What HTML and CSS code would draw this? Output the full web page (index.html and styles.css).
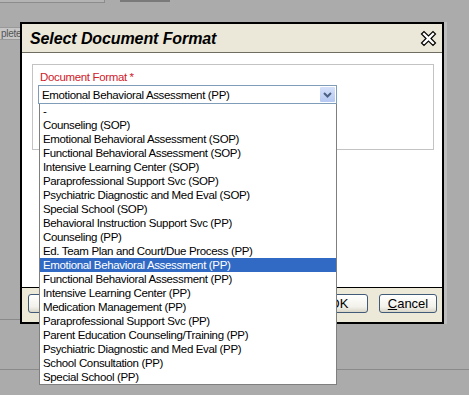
FILE: index.html
```html
<!DOCTYPE html>
<html lang="en">
<head>
    <meta charset="UTF-8">
    <title>Select Document Format</title>
    <link rel="stylesheet" href="styles.css">
</head>
<body>
    <!-- Page behind the dialog -->
    <div class="page">
        <div class="toolbar">
            <div class="tool-field"></div>
            <div class="tool-button"></div>
        </div>
        <div class="status-tag">pleted</div>
        <div class="page-rule rule-upper"></div>
        <div class="page-rule rule-lower"></div>
    </div>

    <!-- Dialog -->
    <div class="dialog">
        <div class="dialog-title">
            <span>Select Document Format</span>
            <svg class="close-icon" width="17" height="17" viewBox="0 0 17 17">
                <polygon points="1.5,4 4,1.5 8.5,6 13,1.5 15.5,4 11,8.5 15.5,13 13,15.5 8.5,11 4,15.5 1.5,13 6,8.5" fill="#fff" stroke="#000" stroke-width="1.2" stroke-linejoin="miter"/>
            </svg>
        </div>
        <div class="dialog-body">
            <div class="fieldset">
                <div class="field-label">Document Format *</div>
                <div class="select-box">
                    <span>Emotional Behavioral Assessment (PP)</span>
                    <div class="select-arrow">
                        <svg width="9" height="6" viewBox="0 0 9 6">
                            <polyline points="1,1 4.5,4.5 8,1" fill="none" stroke="#4d6185" stroke-width="2"/>
                        </svg>
                    </div>
                </div>
            </div>
        </div>
        <div class="dialog-footer">
            <button class="btn btn-left"></button>
            <div class="footer-right">
                <button class="btn">OK</button>
                <button class="btn"><u>C</u>ancel</button>
            </div>
        </div>
    </div>

    <!-- Open dropdown list -->
    <ul class="dropdown">
        <li>-</li>
        <li>Counseling (SOP)</li>
        <li>Emotional Behavioral Assessment (SOP)</li>
        <li>Functional Behavioral Assessment (SOP)</li>
        <li>Intensive Learning Center (SOP)</li>
        <li>Paraprofessional Support Svc (SOP)</li>
        <li>Psychiatric Diagnostic and Med Eval (SOP)</li>
        <li>Special School (SOP)</li>
        <li>Behavioral Instruction Support Svc (PP)</li>
        <li>Counseling (PP)</li>
        <li>Ed. Team Plan and Court/Due Process (PP)</li>
        <li class="selected">Emotional Behavioral Assessment (PP)</li>
        <li>Functional Behavioral Assessment (PP)</li>
        <li>Intensive Learning Center (PP)</li>
        <li>Medication Management (PP)</li>
        <li>Paraprofessional Support Svc (PP)</li>
        <li>Parent Education Counseling/Training (PP)</li>
        <li>Psychiatric Diagnostic and Med Eval (PP)</li>
        <li>School Consultation (PP)</li>
        <li>Special School (PP)</li>
    </ul>
</body>
</html>
```

FILE: styles.css
```css
/* General */
body {
    margin: 0;
    width: 469px;
    height: 395px;
    overflow: hidden;
    background-color: #ababab;
    font-family: 'Liberation Sans', Arial, sans-serif;
    font-size: 11.5px;
    letter-spacing: -0.35px;
    color: #000;
    position: relative;
}

/* Page behind the dialog */
.page {
    height: 395px;
    position: relative;
}

.toolbar {
    display: flex;
    gap: 15px;
    height: 3px;
}

.tool-field {
    width: 104px;
    height: 2px;
    background-color: #b4b4b4;
    border-bottom: 1px solid #8c8c8c;
    border-right: 1px solid #8c8c8c;
}

.tool-button {
    width: 50px;
    height: 2px;
    background-color: #7a7a7a;
}

.status-tag {
    margin-top: 24px;
    width: 30px;
    height: 11px;
    padding-left: 1px;
    background-color: #c6c6c6;
    border: 1px solid #999;
    border-left: none;
    font-size: 10px;
    line-height: 11px;
    letter-spacing: -0.3px;
    color: #555;
    white-space: nowrap;
}

.page-rule {
    position: absolute;
    left: 0;
    right: 0;
    height: 1px;
    background-color: #8a8a8a;
}

.rule-upper {
    top: 319px;
    right: 420px;
}

.rule-lower {
    top: 369px;
}

/* Dialog */
.dialog {
    position: absolute;
    left: 20px;
    top: 22px;
    width: 420px;
    border: 2px solid #000;
    background-color: #fff;
    box-shadow: 3px 0 0 #bdbdbd;
}

.dialog-title {
    height: 28px;
    background-color: #ebe8d9;
    border-bottom: 1px solid #6f6c60;
    display: flex;
    align-items: center;
    justify-content: space-between;
    padding: 0 5px 0 8px;
}

.dialog-title span {
    font-size: 16px;
    font-weight: bold;
    font-style: italic;
    letter-spacing: -0.1px;
    padding-top: 2px;
}

.close-icon {
    display: block;
}

.dialog-body {
    height: 223px;
    padding: 11px 8px 0 10px;
}

.fieldset {
    border: 1px solid #c3c3c3;
    height: 78px;
    padding: 6px 0 0 5px;
}

.field-label {
    color: #d0202a;
    height: 14px;
    padding-left: 2px;
}

.select-box {
    width: 294px;
    height: 17px;
    border: 1px solid #7f9db9;
    display: flex;
    align-items: center;
    justify-content: space-between;
    padding-left: 3px;
}

.select-arrow {
    width: 15px;
    height: 15px;
    margin-right: 1px;
    background: linear-gradient(#d5e1fa, #b5c8f2);
    border-radius: 1px;
    display: flex;
    align-items: center;
    justify-content: center;
}

.dialog-footer {
    height: 35px;
    box-sizing: border-box;
    background-color: #ece9d8;
    border-top: 1px solid #000;
    display: flex;
    align-items: flex-start;
    justify-content: space-between;
    padding: 6px 5px 0 6px;
}

.footer-right {
    display: flex;
    gap: 11px;
}

.btn {
    width: 58px;
    height: 19px;
    border: 1px solid #405a78;
    border-radius: 3px;
    background: linear-gradient(#ffffff, #f2f1ea 70%, #d9d6c8);
    font-family: 'Liberation Sans', Arial, sans-serif;
    font-size: 13px;
    padding: 0;
    color: #000;
}

/* Open dropdown list */
.dropdown {
    position: absolute;
    left: 39px;
    top: 104px;
    width: 296px;
    margin: 0;
    padding: 0;
    list-style: none;
    background-color: #fff;
    border: 1px solid #7f7f7f;
    border-top: none;
}

.dropdown li {
    height: 14px;
    line-height: 14px;
    padding-left: 3px;
    white-space: nowrap;
}

.dropdown li.selected {
    background-color: #316ac5;
    color: #fff;
}
```
